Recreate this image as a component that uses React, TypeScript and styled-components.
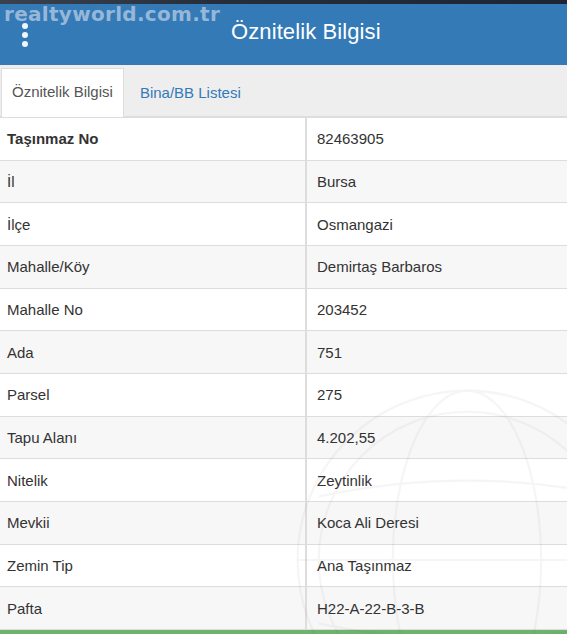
import React from "react"
import styled, { createGlobalStyle } from "styled-components"

const GlobalStyle = createGlobalStyle`
  html, body {
    margin: 0;
    padding: 0;
    background: #ffffff;
  }
  body {
    font-family: "Liberation Sans", Arial, sans-serif;
    color: #333;
    overflow: hidden;
  }
`

const rows: [string, string][] = [
  ["Taşınmaz No", "82463905"],
  ["İl", "Bursa"],
  ["İlçe", "Osmangazi"],
  ["Mahalle/Köy", "Demirtaş Barbaros"],
  ["Mahalle No", "203452"],
  ["Ada", "751"],
  ["Parsel", "275"],
  ["Tapu Alanı", "4.202,55"],
  ["Nitelik", "Zeytinlik"],
  ["Mevkii", "Koca Ali Deresi"],
  ["Zemin Tip", "Ana Taşınmaz"],
  ["Pafta", "H22-A-22-B-3-B"]
]

const Page = styled.div`
  position: relative;
  width: 567px;
  height: 634px;
  overflow: hidden;
  display: flex;
  flex-direction: column;
`

const TopStrip = styled.div`
  height: 4px;
  background: linear-gradient(90deg, #3a4250 0%, #262d3a 40%, #1d2535 100%);
`

const Header = styled.div`
  height: 61px;
  background: #337ab7;
  display: flex;
  align-items: center;
  padding-left: 19px;
`

const MenuDots = styled.div`
  display: flex;
  flex-direction: column;
  gap: 3px;
  width: 12px;
  align-items: center;
  margin-top: 2px;
`

const Dot = styled.span`
  width: 6px;
  height: 6px;
  border-radius: 50%;
  background: #f2f6fa;
`

const Title = styled.h1`
  margin: -4px 0 0 200px;
  font-size: 22px;
  font-weight: 400;
  color: #ffffff;
  letter-spacing: 0.1px;
`

const Watermark = styled.div`
  position: absolute;
  left: 4px;
  top: 2px;
  font-family: "DejaVu Sans", "Liberation Sans", sans-serif;
  font-weight: 700;
  font-size: 20px;
  line-height: 24px;
  color: rgba(196, 212, 230, 0.7);
  letter-spacing: 0.3px;
  pointer-events: none;
`

const TabBar = styled.div`
  height: 52px;
  background: #eeeeee;
  display: flex;
  align-items: flex-end;
  padding-left: 1px;
  border-bottom: 1px solid #dddddd;
`

const Tab = styled.div<{ $active?: boolean }>`
  height: ${(p) => (p.$active ? "49px" : "47px")};
  box-sizing: border-box;
  padding: 0 ${(p) => (p.$active ? "10px" : "15px")} 4px;
  display: flex;
  align-items: center;
  font-size: 15px;
  color: ${(p) => (p.$active ? "#555555" : "#337ab7")};
  background: ${(p) => (p.$active ? "#ffffff" : "transparent")};
  border: 1px solid ${(p) => (p.$active ? "#dddddd" : "transparent")};
  border-bottom: none;
  margin-bottom: -1px;
`

const Table = styled.div`
  display: grid;
  grid-template-columns: 305px 1fr;
  border-top: 1px solid #dddddd;
`

const Cell = styled.div<{ $striped: boolean; $right?: boolean; $bold?: boolean }>`
  height: 42.67px;
  box-sizing: border-box;
  display: flex;
  align-items: center;
  padding: 0 ${(p) => (p.$right ? "10px" : "7px")};
  font-size: 15px;
  color: #333333;
  font-weight: ${(p) => (p.$bold ? 700 : 400)};
  background: ${(p) => (p.$striped ? "rgba(246,246,246,0.88)" : "rgba(255,255,255,0.88)")};
  border-bottom: 1px solid #dddddd;
  border-left: ${(p) => (p.$right ? "2px solid #dddddd" : "none")};
`

const Footer = styled.div`
  height: 4px;
  background: #6db36d;
  flex-shrink: 0;
`

const Body = styled.div`
  position: relative;
  flex: 1;
`

const Globe = styled.svg`
  position: absolute;
  right: -80px;
  bottom: -110px;
  opacity: 0.05;
  pointer-events: none;
`

const App: React.FC = () => {
  return (
    <Page>
      <GlobalStyle />
      <TopStrip />
      <Header>
        <MenuDots>
          <Dot />
          <Dot />
          <Dot />
        </MenuDots>
        <Title>Öznitelik Bilgisi</Title>
      </Header>
      <Watermark>realtyworld.com.tr</Watermark>
      <TabBar>
        <Tab $active>Öznitelik Bilgisi</Tab>
        <Tab>Bina/BB Listesi</Tab>
      </TabBar>
      <Body>
        <Table>
          {rows.map(([label, value], i) => (
            <React.Fragment key={label}>
              <Cell $striped={i % 2 === 1} $bold={i === 0}>
                {label}
              </Cell>
              <Cell $striped={i % 2 === 1} $right>
                {value}
              </Cell>
            </React.Fragment>
          ))}
        </Table>
        <Globe width="360" height="360" viewBox="0 0 340 340">
          <g fill="none" stroke="#555" strokeWidth="2">
            <circle cx="170" cy="170" r="160" />
            <circle cx="170" cy="170" r="140" />
            <ellipse cx="170" cy="170" rx="70" ry="160" />
            <line x1="10" y1="170" x2="330" y2="170" />
            <path d="M30 110 Q170 80 310 110" />
            <path d="M30 230 Q170 260 310 230" />
          </g>
        </Globe>
      </Body>
      <Footer />
    </Page>
  )
}

export default App
